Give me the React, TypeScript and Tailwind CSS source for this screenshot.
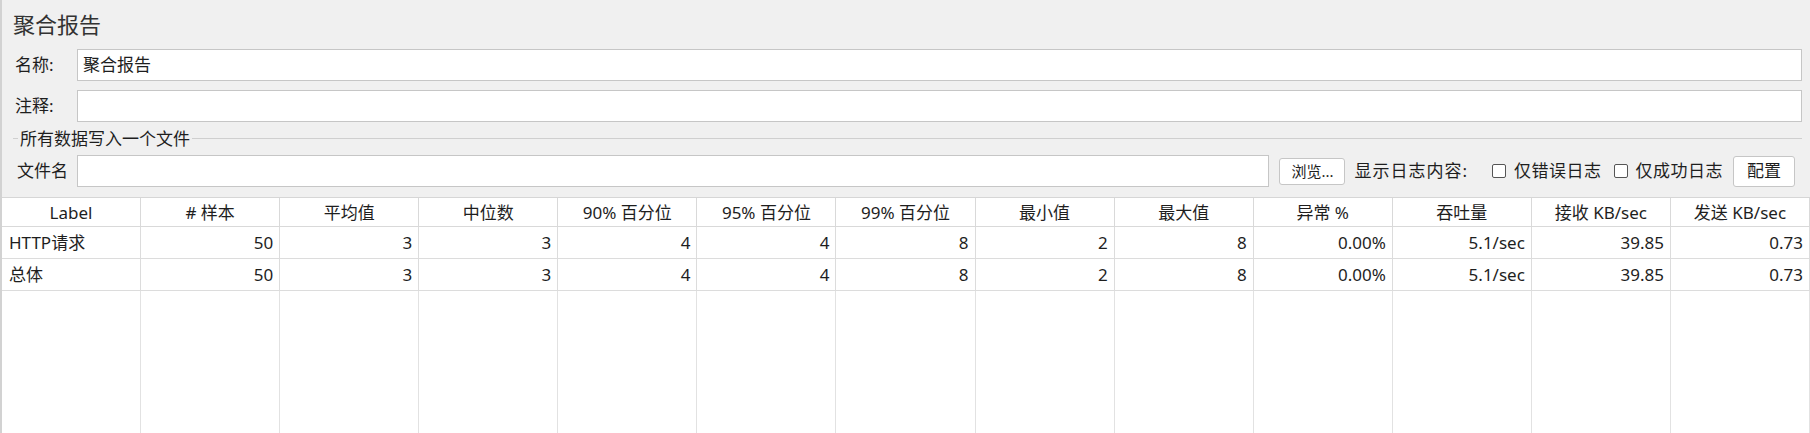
const FONT = "font-['Noto_Sans','Noto_Sans_CJK_SC',sans-serif]"

const HEADERS = ['Label', '# 样本', '平均值', '中位数', '90% 百分位', '95% 百分位', '99% 百分位', '最小值', '最大值', '异常 %', '吞吐量', '接收 KB/sec', '发送 KB/sec']

const ROWS = [
  ['HTTP请求', '50', '3', '3', '4', '4', '8', '2', '8', '0.00%', '5.1/sec', '39.85', '0.73'],
  ['总体', '50', '3', '3', '4', '4', '8', '2', '8', '0.00%', '5.1/sec', '39.85', '0.73'],
]

function Field({ label, value }: { label: string; value?: string }) {
  return (
    <div className="flex h-[32px] items-center pl-[13px] pr-[8px]">
      <span className="w-[62px] shrink-0 text-[17px]">{label}</span>
      <div className="flex h-full flex-1 items-center border border-[#c6c6c6] bg-white px-[5px] text-[17px]">{value}</div>
    </div>
  )
}

function Check({ label }: { label: string }) {
  return (
    <label className="flex items-center gap-[8px] text-[17px] tracking-[0.5px]">
      <span className="h-[14px] w-[14px] rounded-[2px] border border-[#555] bg-white" />
      {label}
    </label>
  )
}

export default function App() {
  return (
    <div className={`flex h-[433px] w-[1810px] flex-col border-l-2 border-[#d2d2d2] bg-[#f0f0f0] text-[#1e1e1e] ${FONT}`}>
      <div className="h-[49px] pl-[11px] pt-[9px] text-[22px] leading-[30px] text-[#333]">聚合报告</div>
      <Field label="名称:" value="聚合报告" />
      <div className="h-[9px]" />
      <Field label="注释:" />

      <div className="flex h-[33px] items-center pl-[11px] pr-[8px]">
        <div className="h-px w-[5px] bg-[#cfcfcf]" />
        <span className="px-[2px] text-[17px] leading-none">所有数据写入一个文件</span>
        <div className="h-px flex-1 bg-[#cfcfcf]" />
      </div>

      <div className="flex h-[32px] items-center pl-[15px] pr-[15px] text-[17px]">
        <span className="w-[60px] shrink-0">文件名</span>
        <div className="h-full flex-1 border border-[#c6c6c6] bg-white" />
        <button className="ml-[10px] h-[27px] w-[66px] rounded-[3px] border border-[#c6c6c6] bg-white text-[15px]">浏览...</button>
        <span className="ml-[9px] tracking-[1px]">显示日志内容:</span>
        <div className="ml-[24px] flex items-center gap-[12px]">
          <Check label="仅错误日志" />
          <Check label="仅成功日志" />
        </div>
        <button className="ml-[10px] h-[31px] w-[62px] rounded-[3px] border border-[#c6c6c6] bg-white text-[17px]">配置</button>
      </div>

      <div className="mt-[10px] grid flex-1 grid-cols-[repeat(13,minmax(0,1fr))] grid-rows-[29px_32px_32px_1fr] border-t border-[#d6d6d6] bg-white text-[17px]">
        {HEADERS.map((h) => (
          <div key={h} className="flex items-center justify-center border-b border-r border-[#d9d9d9] leading-none">{h}</div>
        ))}
        {ROWS.flatMap((row, r) =>
          row.map((cell, c) => (
            <div
              key={`${r}-${c}`}
              className={c === 0
                ? 'flex items-center border-b border-r border-[#dcdcdc] pl-[7px] leading-none'
                : 'flex items-center justify-end border-b border-r border-[#dcdcdc] pr-[6px] leading-none'}
            >
              {cell}
            </div>
          )),
        )}
        {HEADERS.map((h) => (
          <div key={`f-${h}`} className="border-r border-[#e2e2e2]" />
        ))}
      </div>
    </div>
  )
}
